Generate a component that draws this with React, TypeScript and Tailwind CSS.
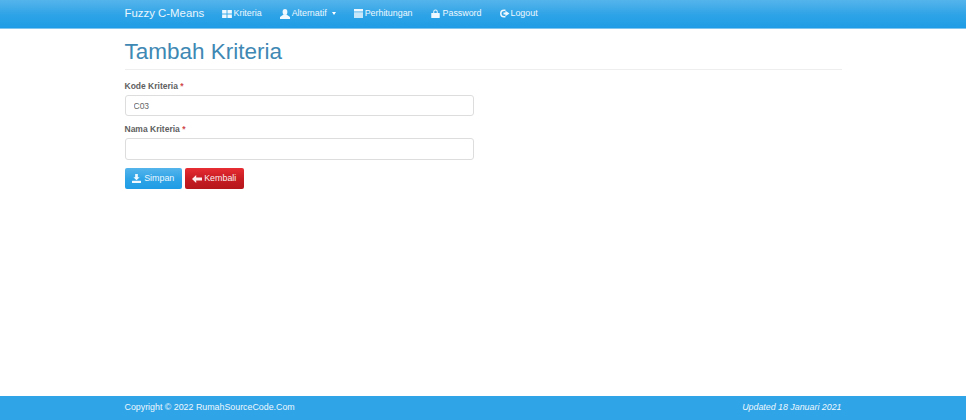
import React from 'react';

const IconGrid = () => (
  <svg width="10" height="8" viewBox="0 0 11 9" fill="currentColor">
    <rect x="0" y="0" width="5" height="4" />
    <rect x="6" y="0" width="5" height="4" />
    <rect x="0" y="5" width="5" height="4" />
    <rect x="6" y="5" width="5" height="4" />
  </svg>
);

const IconUser = () => (
  <svg width="10" height="10" viewBox="0 0 10 10" fill="currentColor">
    <ellipse cx="5" cy="3" rx="2.4" ry="3" />
    <path d="M3.5 5.5 L6.5 5.5 L10 8 L10 10 L0 10 L0 8 Z" />
  </svg>
);

const IconCalendar = () => (
  <svg width="9" height="9" viewBox="0 0 10 10" fill="currentColor">
    <rect x="0" y="0" width="10" height="2.8" />
    <path d="M0 3.6 H10 V10 H0 Z" opacity="0.8" />
  </svg>
);

const IconLock = () => (
  <svg width="9" height="9" viewBox="0 0 10 10" fill="currentColor">
    <path d="M2.5 4.5 V3 a2.5 2.5 0 0 1 5 0 V4.5 H6.4 V3 a1.4 1.4 0 0 0 -2.8 0 V4.5 Z" />
    <rect x="0.3" y="4.5" width="9.4" height="5.5" rx="0.6" />
  </svg>
);

const IconLogout = () => (
  <svg width="10" height="9" viewBox="0 0 11 10" fill="currentColor">
    <path d="M4.5 0.5 a4.5 4.5 0 1 0 0 9 H6 V7.8 H4.5 a2.8 2.8 0 0 1 0 -5.6 H6 V0.5 Z" />
    <path d="M6 3.8 V2 L10.5 5 L6 8 V6.2 H3.8 V3.8 Z" />
  </svg>
);

const IconSave = () => (
  <svg width="9" height="9" viewBox="0 0 10 10" fill="currentColor">
    <path d="M3.5 0 H6.5 V3.5 H8.5 L5 7 L1.5 3.5 H3.5 Z" />
    <rect x="0" y="7.5" width="10" height="2.5" rx="0.4" />
  </svg>
);

const IconBack = () => (
  <svg width="10" height="8" viewBox="0 0 10 8" fill="currentColor">
    <path d="M0 4 L4.2 0 V2.5 H10 V5.5 H4.2 V8 Z" />
  </svg>
);

const navItems = [
  { label: 'Kriteria', icon: <IconGrid />, gap: 'gap-[2px]' },
  { label: 'Alternatif', icon: <IconUser />, gap: 'gap-[2px]', caret: true },
  { label: 'Perhitungan', icon: <IconCalendar />, gap: 'gap-[2px]' },
  { label: 'Password', icon: <IconLock />, gap: 'gap-[3px]' },
  { label: 'Logout', icon: <IconLogout />, gap: 'gap-[1px]' },
];

export default function App() {
  return (
    <div className="h-[420px] flex flex-col bg-white font-['Liberation_Sans',Arial,sans-serif] text-[#555555]">
      {/* Navbar */}
      <nav className="h-[29px] shrink-0 bg-gradient-to-b from-[#54b4eb] via-[#2fa4e7] to-[#1d9ce5] border-b border-[#7fc5ee]">
        <div className="w-[717px] mx-auto h-full flex items-center text-white">
          <span className="text-[11.4px] text-[#eaf6fd] w-[97px]">Fuzzy C-Means</span>
          <ul className="flex items-center gap-[18px] text-[8.9px] text-[#eef8fe]">
            {navItems.map((item) => (
              <li key={item.label} className={`flex items-center ${item.gap}`}>
                {item.icon}
                <span>{item.label}</span>
                {item.caret && <span className="ml-[3px] w-0 h-0 border-x-[2.5px] border-x-transparent border-t-[3px] border-t-white" />}
              </li>
            ))}
          </ul>
        </div>
      </nav>

      {/* Content */}
      <main className="flex-1 w-[717px] mx-auto">
        <div className="pt-[10px] pb-[5px] border-b border-[#eeeeee]">
          <h1 className="text-[22.5px] leading-[25px] text-[#4088b4]">Tambah Kriteria</h1>
        </div>
        <form className="mt-[10px] w-[349px]">
          <label className="block text-[8.5px] leading-[12px] font-bold text-[#5f5f5f]">
            Kode Kriteria <span className="text-[#d0494e]">*</span>
          </label>
          <input
            readOnly
            value="C03"
            className="block w-full h-[21px] mt-[3px] px-2 text-[8.5px] text-[#666666] bg-white border border-[#dddddd] rounded-[3px] outline-none"
          />
          <label className="block mt-[7px] text-[8.5px] leading-[12px] font-bold text-[#5f5f5f]">
            Nama Kriteria <span className="text-[#d0494e]">*</span>
          </label>
          <input
            readOnly
            className="block w-full h-[22px] mt-[3px] px-2 text-[8.5px] bg-white border border-[#dddddd] rounded-[3px] outline-none"
          />
          <div className="flex gap-[2.5px] mt-[8px]">
            <button type="button" className="flex items-center justify-center gap-[3px] w-[57.5px] h-[21px] text-[8.9px] text-[#eef8fe] rounded-[2px] bg-gradient-to-b from-[#54b4eb] via-[#2fa4e7] to-[#1d9ce5]">
              <IconSave />
              Simpan
            </button>
            <button type="button" className="flex items-center justify-center gap-[2px] w-[59.5px] h-[21px] text-[8.9px] text-[#fdeeee] rounded-[2px] bg-gradient-to-b from-[#e72d33] via-[#c71c22] to-[#b5161b]">
              <IconBack />
              Kembali
            </button>
          </div>
        </form>
      </main>

      {/* Footer */}
      <footer className="h-[24px] shrink-0 bg-[#2fa4e7]">
        <div className="w-[717px] mx-auto h-full flex items-center justify-between text-[8.85px] text-[#eef8fe]">
          <span>Copyright © 2022 RumahSourceCode.Com</span>
          <span className="italic">Updated 18 Januari 2021</span>
        </div>
      </footer>
    </div>
  );
}
